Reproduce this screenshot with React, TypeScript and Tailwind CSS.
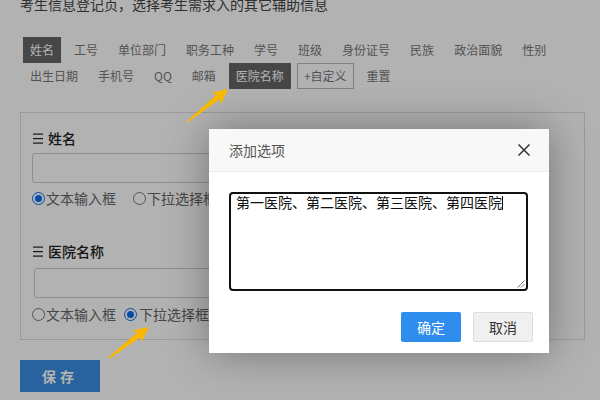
import React from "react";

const tabs: { t: string; kind?: "sel" | "box" }[] = [
  { t: "姓名", kind: "sel" },
  { t: "工号" },
  { t: "单位部门" },
  { t: "职务工种" },
  { t: "学号" },
  { t: "班级" },
  { t: "身份证号" },
  { t: "民族" },
  { t: "政治面貌" },
  { t: "性别" },
  { t: "出生日期" },
  { t: "手机号" },
  { t: "QQ" },
  { t: "邮箱" },
  { t: "医院名称", kind: "sel" },
  { t: "+自定义", kind: "box" },
  { t: "重置" },
];

function MenuIcon() {
  return (
    <svg width="10" height="11" viewBox="0 0 10 11" className="shrink-0">
      <rect x="0" y="0.5" width="10" height="1.2" fill="#222" />
      <rect x="0" y="5" width="10" height="1.2" fill="#222" />
      <rect x="0" y="9.5" width="10" height="1.2" fill="#222" />
    </svg>
  );
}

function Radio({ checked }: { checked?: boolean }) {
  if (checked) {
    return (
      <span className="w-[13px] h-[13px] rounded-full border-[1.5px] border-[#0a6cf0] flex items-center justify-center shrink-0">
        <span className="block w-[7px] h-[7px] rounded-full bg-[#0a6cf0]" />
      </span>
    );
  }
  return <span className="block w-[13px] h-[13px] rounded-full border border-[#777] bg-white shrink-0" />;
}

function Arrow({ x, y, tx, ty }: { x: number; y: number; tx: number; ty: number }) {
  const dx = tx - x;
  const dy = ty - y;
  const L = Math.sqrt(dx * dx + dy * dy);
  const a = (Math.atan2(dy, dx) * 180) / Math.PI;
  const pts = `0,-0.8 ${L - 13},-2.8 ${L - 15},-7.5 ${L},0 ${L - 15},7.5 ${L - 13},2.8 0,0.8`;
  return <polygon points={pts} fill="#f9b800" transform={`translate(${x} ${y}) rotate(${a})`} />;
}

export default function App() {
  return (
    <div className="relative w-[600px] h-[400px] overflow-hidden bg-white font-['Noto_Sans_CJK_SC',sans-serif] px-[20px] flex flex-col items-start">
      <p className="-mt-[6px] text-[14px] leading-[20px] text-[#444] whitespace-nowrap">
        考生信息登记页，选择考生需求入的其它辅助信息
      </p>

      <div className="mt-[23px] ml-[3px] w-[560px] flex flex-wrap">
        {tabs.map((tab) => (
          <div
            key={tab.t}
            className={
              tab.kind === "sel"
                ? "h-[26px] leading-[26px] px-[7px] mr-[6px] text-[12px] bg-[#666] text-white"
                : tab.kind === "box"
                ? "h-[26px] leading-[24px] px-[6px] mr-[6px] text-[12px] border border-[#bbb] text-[#777]"
                : "h-[26px] leading-[26px] px-[7px] mr-[6px] text-[12px] text-[#777]"
            }
          >
            {tab.t}
          </div>
        ))}
      </div>

      <div className="mt-[23px] w-[565px] h-[228px] border border-[#ddd] pl-[11px] pt-[15px] flex flex-col items-start">
        <div className="h-[20px] ml-[1px] flex items-center gap-[5px] text-[14px] font-medium text-[#222]">
          <MenuIcon />
          <span>姓名</span>
        </div>
        <div className="mt-[5px] w-[300px] h-[30px] border border-[#ccc] rounded-[3px] bg-white" />
        <div className="mt-[5px] h-[20px] flex items-center text-[14px] text-[#666]">
          <Radio checked />
          <span className="ml-[1px]">文本输入框</span>
          <span className="ml-[17px] flex">
            <Radio />
          </span>
          <span className="ml-[1px]">下拉选择框</span>
        </div>

        <div className="mt-[33px] h-[20px] ml-[1px] flex items-center gap-[5px] text-[14px] font-medium text-[#222]">
          <MenuIcon />
          <span>医院名称</span>
        </div>
        <div className="mt-[7px] ml-[2px] w-[300px] h-[30px] border border-[#ccc] rounded-[3px] bg-white" />
        <div className="mt-[6px] h-[20px] flex items-center text-[14px] text-[#666]">
          <Radio />
          <span className="ml-[1px]">文本输入框</span>
          <span className="ml-[8px] flex">
            <Radio checked />
          </span>
          <span className="ml-[2px]">下拉选择框</span>
        </div>
      </div>

      <button className="mt-[20px] w-[80px] h-[32px] bg-[#3a8ee6] text-white font-bold text-[14px] tracking-[4px]">
        保存
      </button>

      <div className="absolute inset-0 bg-black/30" />

      <div className="absolute left-[209px] top-[129px] w-[340px] h-[224px] bg-white shadow-[0_0_40px_rgba(0,0,0,0.35)] flex flex-col items-start">
        <div className="w-full h-[43px] bg-[#f8f8f8] border-b border-[#eee] flex items-center justify-between pl-[20px] pr-[19px]">
          <span className="text-[14px] text-[#555]">添加选项</span>
          <svg width="12" height="12" viewBox="0 0 12 12">
            <path d="M0.5 0.5 L11.5 11.5 M11.5 0.5 L0.5 11.5" stroke="#333" strokeWidth="1.5" />
          </svg>
        </div>
        <div className="relative mt-[20px] ml-[20px] w-[299px] h-[99px] border-2 border-[#111] rounded-[4px] px-[5px] text-[14px] leading-[17px] text-[#111] whitespace-nowrap">
          第一医院、第二医院、第三医院、第四医院
          <span className="inline-block w-[1px] h-[14px] bg-[#111] align-[-2px]" />
          <svg width="9" height="9" viewBox="0 0 9 9" className="absolute right-[1px] bottom-[1px]">
            <path d="M8.5 1.5 L1.5 8.5 M8.5 5 L5 8.5" stroke="#777" strokeWidth="1" />
          </svg>
        </div>
        <div className="w-full mt-[21px] flex justify-end gap-[12px] pr-[16px]">
          <button className="w-[60px] h-[30px] rounded-[2px] bg-[#2e8ded] text-white text-[14px]">确定</button>
          <button className="w-[60px] h-[30px] rounded-[2px] bg-[#f0f0f0] border border-[#ddd] text-[#333] text-[14px]">
            取消
          </button>
        </div>
      </div>

      <svg className="absolute inset-0 pointer-events-none" width="600" height="400" viewBox="0 0 600 400">
        <Arrow x={187} y={122} tx={228} ty={89} />
        <Arrow x={109} y={358} tx={149} ty={327} />
      </svg>
    </div>
  );
}
